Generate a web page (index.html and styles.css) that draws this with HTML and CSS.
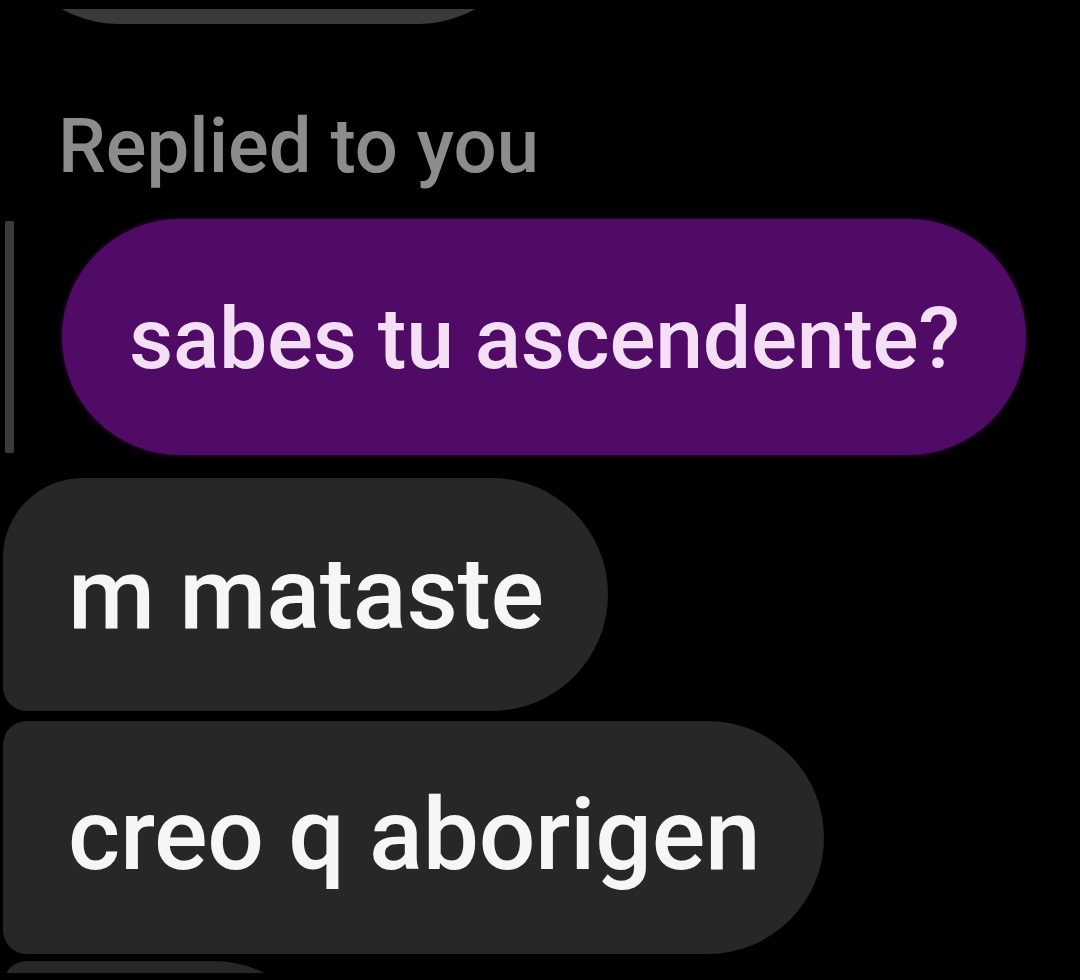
FILE: index.html
```html
<!DOCTYPE html>
<html lang="es">
<head>
<meta charset="utf-8">
<title>Replied to you</title>
<link rel="stylesheet" href="styles.css">
</head>
<body>
<div class="frame">
  <div class="bubble gray prev"></div>
  <div class="label">Replied to you</div>
  <div class="reply">
    <div class="bar"></div>
    <div class="bubble purple">sabes tu ascendente?</div>
  </div>
  <div class="bubble gray msg first">m mataste</div>
  <div class="bubble gray msg mid">creo q aborigen</div>
  <div class="bubble gray next"></div>
</div>
</body>
</html>
```
FILE: styles.css
```css
html, body {
  margin: 0;
  padding: 0;
  background: #000;
  height: 980px;
  overflow: hidden;
}
body {
  font-family: Roboto, "Liberation Sans", sans-serif;
  font-weight: 500;
}
.frame {
  margin-top: 9px;
  height: 964px;
  overflow: hidden;
  display: flex;
  flex-direction: column;
  align-items: flex-start;
}
.frame > * {
  flex-shrink: 0;
}
.bubble {
  box-sizing: border-box;
  white-space: nowrap;
}
.gray {
  background: #272727;
  color: #f6f6f6;
}
.prev {
  background: #3a3a3a;
  width: 533px;
  height: 234px;
  margin-top: -219px;
  margin-left: 2px;
  border-radius: 117px;
}
.label {
  margin-top: 84px;
  margin-left: 58px;
  font-size: 76px;
  line-height: 76px;
  color: #8c8c8c;
}
.reply {
  margin-top: 35px;
  display: flex;
  align-items: center;
  gap: 48px;
  margin-left: 5px;
}
.bar {
  width: 9px;
  height: 232px;
  background: #3b3b3b;
  border-radius: 2px;
}
.purple {
  background: #4f0b65;
  color: #f4dff6;
  font-size: 86px;
  line-height: 86px;
  letter-spacing: -0.3px;
  padding: 77px 66px 73px 67px;
  border-radius: 118px;
  box-shadow: 0 0 5px rgba(90, 15, 110, 0.7);
}
.msg {
  font-size: 100px;
  line-height: 100px;
  letter-spacing: -0.3px;
  padding: 66px 64px 67px 65px;
  margin-left: 3px;
}
.first {
  margin-top: 23px;
  border-radius: 80px 117px 117px 24px;
}
.mid {
  margin-top: 10px;
  padding-top: 64px;
  padding-bottom: 69px;
  border-radius: 24px 117px 117px 24px;
}
.next {
  width: 327px;
  height: 234px;
  margin-top: 7px;
  margin-left: 3px;
  border-radius: 24px 117px 117px 24px;
}
```
